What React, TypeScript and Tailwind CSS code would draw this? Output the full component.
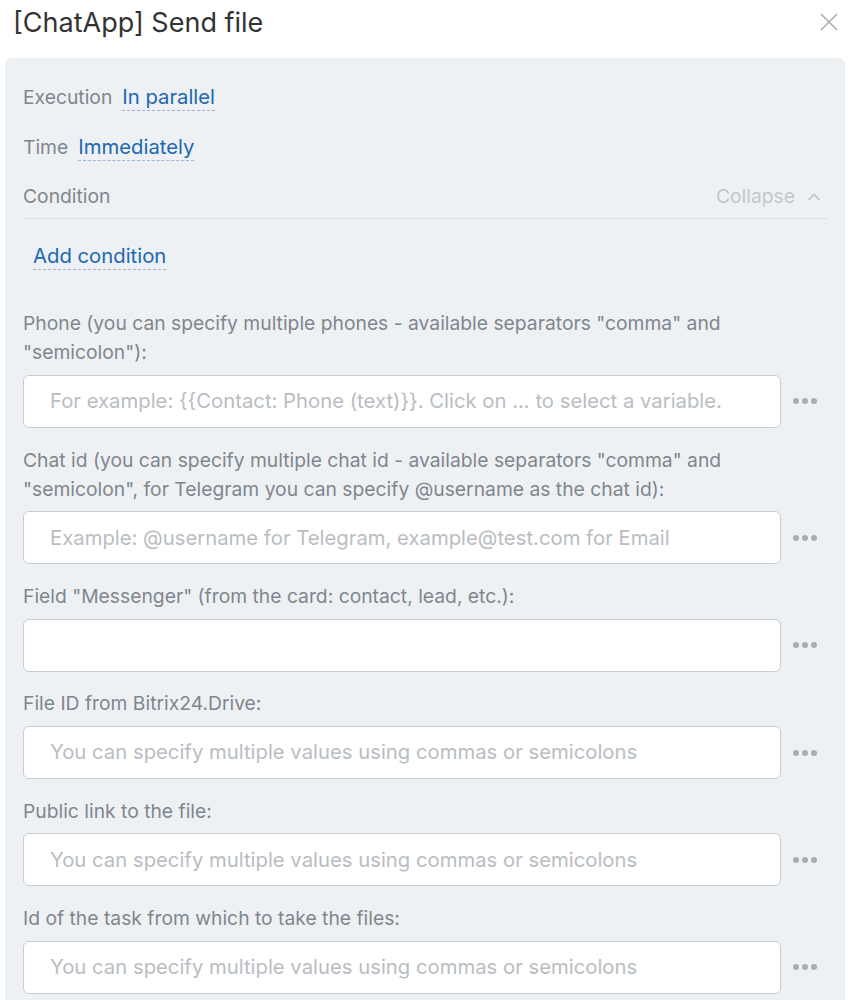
import React from "react";

const font = { fontFamily: "Inter, 'Noto Sans', sans-serif" };

function Field({ label, placeholder }: { label: React.ReactNode; placeholder?: string }) {
  return (
    <div className="flex flex-col">
      <div className="text-[19.3px] leading-[29px] text-[#80868e] pr-[14px]">{label}</div>
      <div className="flex items-center mt-[7.7px]">
        <div className="flex-1 h-[53px] rounded-[6px] border border-[#c9ccd1] bg-white flex items-center pl-[26px] text-[20.3px] text-[#b9bdc2] whitespace-nowrap overflow-hidden">
          {placeholder}
        </div>
        <div className="w-[46px] flex items-center justify-center gap-[3px] pl-[1px]">
          <span className="w-[6px] h-[6px] rounded-full bg-[#a9adb3]" />
          <span className="w-[6px] h-[6px] rounded-full bg-[#a9adb3]" />
          <span className="w-[6px] h-[6px] rounded-full bg-[#a9adb3]" />
        </div>
      </div>
    </div>
  );
}

export default function App() {
  const multi = "You can specify multiple values using commas or semicolons";
  return (
    <div className="w-[855px] h-[1000px] bg-white overflow-hidden" style={font}>
      <div className="flex items-center justify-between h-[44px] pl-[13px] pr-[16px]">
        <h1 className="text-[27px] text-[#333333] leading-none">[ChatApp] Send file</h1>
        <svg width="20" height="20" viewBox="0 0 20 20" className="text-[#a9adb3]">
          <path d="M2 2 L18 18 M18 2 L2 18" stroke="currentColor" strokeWidth="1.6" />
        </svg>
      </div>
      <div className="mx-[5px] mt-[14px] w-[840px] bg-[#eef1f4] rounded-[6px] pl-[18px] pr-[18px] pt-[20px] pb-[40px]">
        <div className="flex items-baseline gap-[10px] leading-[38px]">
          <span className="text-[19.3px] text-[#80868e]">Execution</span>
          <span className="text-[20.3px] text-[#2067b0] border-b border-dashed border-[#9db4d6] leading-[26px]">In parallel</span>
        </div>
        <div className="flex items-baseline gap-[10px] leading-[38px] mt-[12px]">
          <span className="text-[19.3px] text-[#80868e]">Time</span>
          <span className="text-[20.3px] text-[#2067b0] border-b border-dashed border-[#9db4d6] leading-[26px]">Immediately</span>
        </div>
        <div className="flex items-center justify-between mt-[9px] h-[44px] border-b border-[#dcdfe3] text-[19.3px]">
          <span className="text-[#80868e]">Condition</span>
          <span className="flex items-center gap-[12px] text-[#c3c7cc] pr-[6px]">
            Collapse
            <svg width="14" height="10" viewBox="0 0 14 10">
              <path d="M1.5 8 L7 2.5 L12.5 8" stroke="#c3c7cc" strokeWidth="1.8" fill="none" />
            </svg>
          </span>
        </div>
        <div className="mt-[24px] pl-[10px] h-[27px]">
          <span className="text-[20.3px] text-[#2067b0] border-b border-dashed border-[#9db4d6] leading-[26px] inline-block">Add condition</span>
        </div>
        <div className="flex flex-col gap-[17.7px] mt-[39.3px]">
          <Field
            label={'Phone (you can specify multiple phones - available separators "comma" and "semicolon"):'}
            placeholder="For example: {{Contact: Phone (text)}}. Click on ... to select a variable."
          />
          <Field
            label={'Chat id (you can specify multiple chat id - available separators "comma" and "semicolon", for Telegram you can specify @username as the chat id):'}
            placeholder="Example: @username for Telegram, example@test.com for Email"
          />
          <Field label={'Field "Messenger" (from the card: contact, lead, etc.):'} placeholder="" />
          <Field label="File ID from Bitrix24.Drive:" placeholder={multi} />
          <Field label="Public link to the file:" placeholder={multi} />
          <Field label="Id of the task from which to take the files:" placeholder={multi} />
        </div>
      </div>
    </div>
  );
}
